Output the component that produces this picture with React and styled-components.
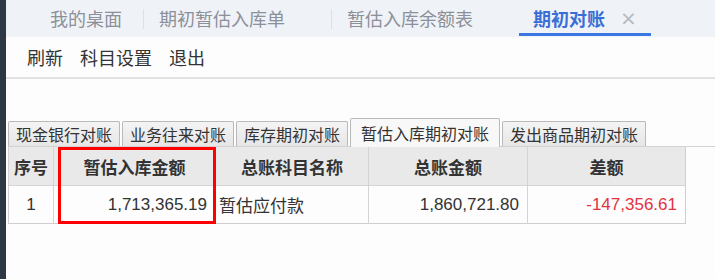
import styled, { createGlobalStyle } from 'styled-components'

const GlobalStyle = createGlobalStyle`
  html, body { margin: 0; padding: 0; background: #fdfdfd; }
  body { font-family: "Noto Sans CJK SC", "Liberation Sans", sans-serif; }
`

const Page = styled.div`
  display: flex;
  width: 715px;
  height: 279px;
  overflow: hidden;
`

const SideStrip = styled.div`
  width: 6px;
  flex: none;
  background: #2e3744;
`

const Main = styled.div`
  flex: 1;
  display: flex;
  flex-direction: column;
  background: #fdfdfd;
`

const TopBar = styled.div`
  height: 37px;
  display: flex;
  align-items: stretch;
  padding-left: 29px;
  background: #eff2f7;
  box-sizing: border-box;
`

const TopTabGroup = styled.div`
  display: flex;
`

const TopTab = styled.div`
  display: flex;
  align-items: center;
  height: 36px;
  box-sizing: border-box;
  padding: 3px ${p => (p.$first ? '21px' : '15px')} 0 ${p => (p.$active ? '14px' : '15px')};
  font-size: 18px;
  line-height: 20px;
  color: ${p => (p.$active ? '#3a6ed6' : '#8b9099')};
  font-weight: ${p => (p.$active ? 700 : 400)};
  border-bottom: 3px solid ${p => (p.$active ? '#3b77e2' : 'transparent')};
`

const Close = styled.span`
  width: 16px;
  margin-left: 15px;
  font-size: 20px;
  font-weight: 400;
  color: #b5b9c0;
  visibility: ${p => (p.$show ? 'visible' : 'hidden')};
  font-family: "DejaVu Sans", sans-serif;
`

const Sep = styled.div`
  width: 1px;
  height: 20px;
  align-self: center;
  background: #dde1e7;
`

const Toolbar = styled.div`
  height: 40px;
  display: flex;
  align-items: center;
  gap: 17px;
  padding-left: 21px;
  border-bottom: 2px solid #e2e2e2;
  background: #fdfdfd;
`

const ToolItem = styled.span`
  font-size: 18px;
  line-height: 20px;
  color: #333;
`

const Content = styled.div`
  padding: 39px 0 0 2px;
`

const SheetTabs = styled.div`
  display: flex;
  align-items: flex-end;
  gap: 2px;
  height: 28px;
  border-bottom: 1px solid #d2d2d2;
`

const SheetTab = styled.div`
  height: ${p => (p.$active ? '29px' : '25px')};
  box-sizing: border-box;
  padding: 0 ${p => (p.$active ? '10px' : '7px')};
  display: flex;
  align-items: center;
  font-size: 16px;
  color: #333;
  border: 1px solid #b9b9b9;
  border-bottom: none;
  border-radius: 2px 2px 0 0;
  background: ${p => (p.$active ? '#f8f8f8' : 'linear-gradient(#f4f4f4, #e6e6e6)')};
  margin-bottom: ${p => (p.$active ? '-1px' : '0')};
`

const Table = styled.div`
  display: grid;
  grid-template-columns: 45px 162px 153px 159px 157px;
  width: 676px;
  border-left: 1px solid #cfcfcf;
  border-right: 1px solid #cfcfcf;
  position: relative;
`

const HeadCell = styled.div`
  height: 38px;
  display: flex;
  align-items: center;
  justify-content: center;
  background: #e9e9e9;
  font-size: 17px;
  font-weight: 700;
  color: #333;
  border-right: 1px solid #d4d4d4;
  border-bottom: 1px solid #d4d4d4;
  &:nth-child(5n) { border-right: none; }
`

const Cell = styled.div`
  height: 37px;
  display: flex;
  align-items: center;
  justify-content: ${p => p.$align || 'flex-end'};
  padding: 0 ${p => (p.$align === 'flex-start' ? '3px' : '8px')};
  font-family: ${p => (p.$num ? '"Liberation Sans", sans-serif' : 'inherit')};
  font-size: 17px;
  color: ${p => (p.$neg ? '#e2343f' : '#333')};
  background: #fdfdfd;
  border-right: 1px solid #d4d4d4;
  border-bottom: 1px solid #cfcfcf;
  &:nth-child(5n) { border-right: none; }
`

const Highlight = styled.div`
  position: absolute;
  left: 49px;
  top: 0;
  width: 158px;
  height: 77px;
  border: 3px solid #f00;
  box-sizing: border-box;
  pointer-events: none;
`

const topTabs = ['我的桌面', '期初暂估入库单', '暂估入库余额表']
const sheetTabs = ['现金银行对账', '业务往来对账', '库存期初对账', '暂估入库期初对账', '发出商品期初对账']
const heads = ['序号', '暂估入库金额', '总账科目名称', '总账金额', '差额']

export default function App() {
  return (
    <Page>
      <GlobalStyle />
      <SideStrip />
      <Main>
        <TopBar>
          {topTabs.map((t, i) => (
            <TopTabGroup key={t}>
              {i > 0 && <Sep />}
              <TopTab $first={i === 0}>
                {t}
                {i > 0 && <Close>×</Close>}
              </TopTab>
            </TopTabGroup>
          ))}
          <TopTab $active>
            期初对账
            <Close $show>×</Close>
          </TopTab>
        </TopBar>
        <Toolbar>
          <ToolItem>刷新</ToolItem>
          <ToolItem>科目设置</ToolItem>
          <ToolItem>退出</ToolItem>
        </Toolbar>
        <Content>
          <SheetTabs>
            {sheetTabs.map(t => (
              <SheetTab key={t} $active={t === '暂估入库期初对账'}>{t}</SheetTab>
            ))}
          </SheetTabs>
          <Table>
            {heads.map(h => <HeadCell key={h}>{h}</HeadCell>)}
            <Cell $align="center" $num>1</Cell>
            <Cell $num>1,713,365.19</Cell>
            <Cell $align="flex-start">暂估应付款</Cell>
            <Cell $num>1,860,721.80</Cell>
            <Cell $num $neg>-147,356.61</Cell>
            <Highlight />
          </Table>
        </Content>
      </Main>
    </Page>
  )
}
